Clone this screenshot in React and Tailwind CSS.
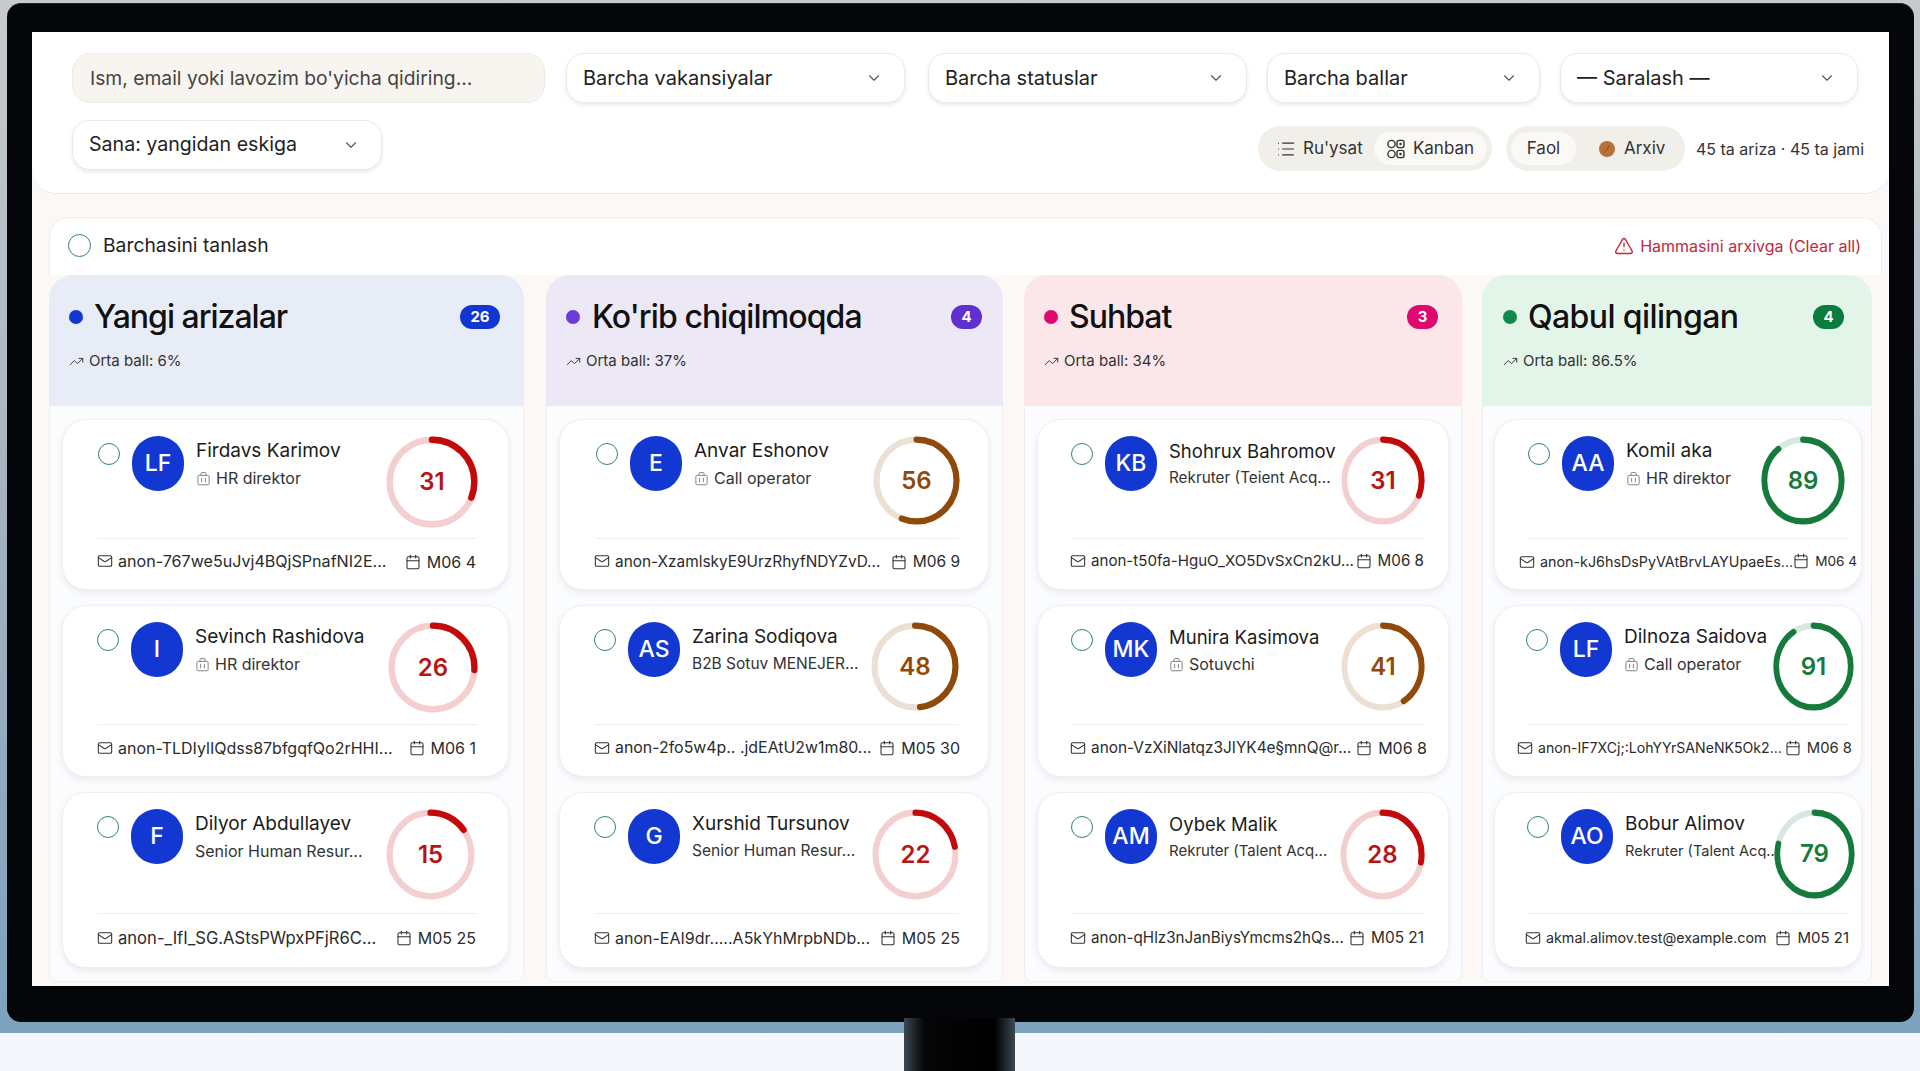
import React from 'react';
import { ChevronDown, List, TriangleAlert, TrendingUp, Mail, Calendar } from 'lucide-react';

const FILTERS = [
    { label: 'Barcha vakansiyalar', width: 'w-[339px]' },
    { label: 'Barcha statuslar', width: 'w-[319px]' },
    { label: 'Barcha ballar', width: 'w-[273px]' },
    { label: '— Saralash —', width: 'w-[298px]' },
];

const RING_TONES = {
    red: { arc: '#c30a0a', track: '#f4cfcf', text: 'text-[#b81414]' },
    brown: { arc: '#8f4a0b', track: '#ecdfd4', text: 'text-[#8f4a0b]' },
    green: { arc: '#157a3c', track: '#d9e8de', text: 'text-[#157a3c]' },
};

const COLUMNS = [
    {
        title: 'Yangi arizalar',
        count: 26,
        avg: '6%',
        width: 'w-[475px]',
        head: 'bg-[#e8ecf7] pl-[20px] pr-[24px]',
        dot: 'bg-[#1038d0]',
        badge: 'bg-[#1038d0] w-[40px]',
        titleCls: 'ml-[11px] tracking-[-1px]',
        body: 'pl-[12px] pr-[14px]',
        top: 'pl-[35px] pr-[30px]',
        rule: 'ml-[34px] mr-[31px]',
        foot: 'pl-[34px] pr-[32px]',
        cards: [
            { initials: 'LF', name: 'Firdavs Karimov', role: 'HR direktor', icon: true, score: 31, tone: 'red', mail: 'anon-767we5uJvj4BQjSPnafNI2E...', mailSize: 'text-[16.1px]', date: 'M06 4', ring: 'w-[92px] h-[92px]' },
            { initials: 'I', name: 'Sevinch Rashidova', role: 'HR direktor', icon: true, score: 26, tone: 'red', mail: 'anon-TLDIylIQdss87bfgqfQo2rHHI...', date: 'M06 1', ring: 'w-[90px] h-[91px]', top: 'pl-[34px] pr-[30px]' },
            { initials: 'F', name: 'Dilyor Abdullayev', role: 'Senior Human Resur...', score: 15, tone: 'red', mail: 'anon-_IfI_SG.AStsPWpxPFjR6C...', mailSize: 'text-[16.6px]', date: 'M05 25', ring: 'w-[89px] h-[91px]', top: 'pl-[34px] pr-[33px]' },
        ],
    },
    {
        title: "Ko'rib chiqilmoqda",
        count: 4,
        avg: '37%',
        width: 'w-[457px]',
        head: 'bg-[#ece8f6] pl-[20px] pr-[21px]',
        dot: 'bg-[#6d3bd8]',
        badge: 'bg-[#5f2fd0] w-[31px]',
        titleCls: 'ml-[12px] tracking-[-0.9px]',
        body: 'pl-[12px] pr-[13px]',
        top: 'pl-[36px] pr-[28px]',
        rule: 'ml-[35px] mr-[29px]',
        foot: 'pl-[34px] pr-[28px]',
        cards: [
            { initials: 'E', name: 'Anvar Eshonov', role: 'Call operator', icon: true, score: 56, tone: 'brown', mail: 'anon-XzamlskyE9UrzRhyfNDYZvD...', mailSize: 'text-[15.4px]', date: 'M06 9', dateSize: 'text-[15.5px]', ring: 'w-[87px] h-[89px]' },
            { initials: 'AS', name: 'Zarina Sodiqova', role: 'B2B Sotuv MENEJER...', roleSize: 'text-[15.5px]', score: 48, tone: 'brown', mail: 'anon-2fo5w4p.. .jdEAtU2w1m80...', mailSize: 'text-[15.9px]', date: 'M05 30', ring: 'w-[88px] h-[89px]', top: 'pl-[34px] pr-[29px]' },
            { initials: 'G', name: 'Xurshid Tursunov', role: 'Senior Human Resur...', roleSize: 'text-[15.6px]', score: 22, tone: 'red', mail: 'anon-EAI9dr.....A5kYhMrpbNDb...', date: 'M05 25', ring: 'w-[87px] h-[91px]', top: 'pl-[34px] pr-[29px]' },
        ],
    },
    {
        title: 'Suhbat',
        count: 3,
        avg: '34%',
        width: 'w-[438px]',
        head: 'bg-[#fbe7e9] pl-[20px] pr-[24px]',
        dot: 'bg-[#e0086f]',
        badge: 'bg-[#dc0a6e] w-[31px]',
        titleCls: 'ml-[11px] tracking-[-1px]',
        body: 'pl-[12px] pr-[12px]',
        top: 'pl-[33px] pr-[23px]',
        rule: 'ml-[34px] mr-[24px]',
        foot: 'pl-[32px] pr-[24px]',
        cards: [
            { initials: 'KB', name: 'Shohrux Bahromov', nameSize: 'text-[18.5px]', role: 'Rekruter (Teient Acq...', roleSize: 'text-[15.3px]', score: 31, tone: 'red', mail: 'anon-t50fa-HguO_XO5DvSxCn2kU...', mailSize: 'text-[15.1px]', date: 'M06 8', dateSize: 'text-[15.2px]', ring: 'w-[84px] h-[89px]' },
            { initials: 'MK', name: 'Munira Kasimova', nameSize: 'text-[18.5px]', role: 'Sotuvchi', icon: true, score: 41, tone: 'brown', mail: 'anon-VzXiNlatqz3JIYK4e§mnQ@r...', mailSize: 'text-[15.4px]', date: 'M06 8', ring: 'w-[84px] h-[89px]', foot: 'pl-[32px] pr-[21px]' },
            { initials: 'AM', name: 'Oybek Malik', nameSize: 'text-[18.5px]', role: 'Rekruter (Talent Acq...', roleSize: 'text-[15px]', score: 28, tone: 'red', mail: 'anon-qHlz3nJanBiysYmcms2hQs...', mailSize: 'text-[15.2px]', date: 'M05 21', dateSize: 'text-[15.4px]', ring: 'w-[85px] h-[91px]' },
        ],
    },
    {
        title: 'Qabul qilingan',
        count: 4,
        avg: '86.5%',
        width: 'w-[390px]',
        head: 'bg-[#e3f4e9] pl-[21px] pr-[28px]',
        dot: 'bg-[#0f8a4a]',
        badge: 'bg-[#0a7d3e] w-[31px]',
        titleCls: 'ml-[11px] tracking-[-0.6px]',
        body: 'pl-[11px] pr-[9px]',
        top: 'pl-[33px] pr-[8px]',
        rule: 'ml-[32px] mr-[12px]',
        foot: 'pl-[24px] pr-[7px]',
        cards: [
            { initials: 'AA', name: 'Komil aka', role: 'HR direktor', icon: true, score: 89, tone: 'green', mail: 'anon-kJ6hsDsPyVAtBrvLAYUpaeEs...', mailSize: 'text-[14.3px]', date: 'M06 4', dateSize: 'text-[13.6px]', ring: 'w-[84px] h-[89px] mr-[8px]' },
            { initials: 'LF', name: 'Dilnoza Saidova', role: 'Call operator', icon: true, score: 91, tone: 'green', mail: 'anon-IF7XCj;:LohYYrSANeNK5Ok2...', mailSize: 'text-[14.1px]', date: 'M06 8', dateSize: 'text-[14.8px]', ring: 'w-[81px] h-[89px]', top: 'pl-[31px] pr-[7px]', foot: 'pl-[22px] pr-[9px]' },
            { initials: 'AO', name: 'Bobur Alimov', role: 'Rekruter (Talent Acq...', roleSize: 'text-[14.6px]', score: 79, tone: 'green', mail: 'akmal.alimov.test@example.com', mailSize: 'text-[14.3px]', date: 'M05 21', dateSize: 'text-[15px]', ring: 'w-[81px] h-[90px]', top: 'pl-[32px] pr-[6px]', foot: 'pl-[30px] pr-[12px]' },
        ],
    },
];

const SelectBox = ({ label, width, textSize = 'text-[20px]' }) => (
    <div className={`${width} h-[50px] flex items-center justify-between pl-[16px] pr-[21px] bg-white rounded-[18px] border border-[#ebebeb] shadow-[0_2px_4px_rgba(0,0,0,0.09)] text-[#222] ${textSize}`}>
        <span>{label}</span>
        <ChevronDown size={18} strokeWidth={1.5} className="text-[#555]" />
    </div>
);

const RadioDot = ({ className = '' }) => (
    <span className={`block shrink-0 rounded-full border-[1.5px] border-[#2f8a58] ${className}`} />
);

const KanbanIcon = () => (
    <svg width="18" height="20" viewBox="0 0 18 20" fill="none" stroke="#333" strokeWidth="1.4">
        <circle cx="4.5" cy="5" r="3.6" />
        <circle cx="4.5" cy="15" r="3.6" />
        <rect x="10" y="1.4" width="7" height="7.2" rx="2" />
        <rect x="10" y="11.4" width="7" height="7.2" rx="2" />
        <rect x="12.4" y="3.8" width="2.2" height="2.4" fill="#333" stroke="none" />
        <rect x="12.4" y="13.8" width="2.2" height="2.4" fill="#333" stroke="none" />
    </svg>
);

const ArchiveDot = () => (
    <svg width="16" height="16" viewBox="0 0 16 16">
        <circle cx="8" cy="8" r="8" fill="#b87239" />
        <path d="M4.5 12 Q8.5 9 10.5 4" stroke="#8a4c1c" strokeWidth="1" fill="none" />
    </svg>
);

const RoleIcon = () => (
    <svg width="15" height="15" viewBox="0 0 24 24" fill="none" stroke="#858585" strokeWidth="1.6" className="shrink-0">
        <rect x="3" y="7" width="18" height="15" rx="2" />
        <path d="M8 7V4a1.5 1.5 0 0 1 1.5-1.5h5A1.5 1.5 0 0 1 16 4v3" />
        <path d="M9 11v7M15 11v7" />
    </svg>
);

const ScoreRing = ({ score, tone, size }) => {
    const { arc, track, text } = RING_TONES[tone];
    return (
        <div className={`relative shrink-0 ml-auto flex items-center justify-center ${size}`}>
            <svg viewBox="0 0 100 100" preserveAspectRatio="none" className="absolute inset-0 w-full h-full">
                <circle cx="50" cy="50" r="46" fill="none" stroke={track} strokeWidth="7" />
                <circle
                    cx="50"
                    cy="50"
                    r="46"
                    fill="none"
                    stroke={arc}
                    strokeWidth="7"
                    strokeLinecap="round"
                    pathLength="100"
                    strokeDasharray={`${score} 100`}
                    transform="rotate(-90 50 50)"
                />
            </svg>
            <span className={`text-[24px] font-semibold leading-none ${text}`}>{score}</span>
        </div>
    );
};

const CandidateCard = ({ card, col, height, rowHeight }) => (
    <div className={`${height} flex flex-col pt-[16px] bg-white rounded-[24px] border border-[#eff0f3] shadow-[0_3px_6px_rgba(40,50,80,0.09)]`}>
        <div className={`flex items-start ${rowHeight} ${card.top || col.top}`}>
            <RadioDot className="w-[22px] h-[22px] mt-[7px]" />
            <div className="w-[52px] h-[55px] ml-[12px] mr-[12px] shrink-0 rounded-full bg-[#1338d2] flex items-center justify-center text-white text-[23px] font-medium">
                {card.initials}
            </div>
            <div className="min-w-0 whitespace-nowrap">
                <div className={`mt-[3px] leading-[24px] text-[#1b1b1b] ${card.nameSize || 'text-[19px]'}`}>{card.name}</div>
                <div className={`mt-[3px] flex items-center gap-[5px] leading-[24px] text-[#333] ${card.roleSize || 'text-[16px]'}`}>
                    {card.icon && <RoleIcon />}
                    <span>{card.role}</span>
                </div>
            </div>
            <ScoreRing score={card.score} tone={card.tone} size={card.ring} />
        </div>
        <div className={`h-px bg-[#eeeff2] ${col.rule}`} />
        <div className={`flex flex-1 items-center justify-between pb-[5px] whitespace-nowrap text-[#2b2b2b] ${card.foot || col.foot}`}>
            <span className={`flex items-center gap-[5px] ${card.mailSize || 'text-[16px]'}`}>
                <Mail size={16} strokeWidth={1.6} className="text-[#333] shrink-0" />
                {card.mail}
            </span>
            <span className={`flex items-center gap-[6px] ${card.dateSize || 'text-[16px]'}`}>
                <Calendar size={16} strokeWidth={1.6} className="text-[#333] shrink-0" />
                {card.date}
            </span>
        </div>
    </div>
);

const KanbanColumn = ({ col }) => (
    <div className={`${col.width} shrink-0 flex flex-col`}>
        <div className={`h-[131px] rounded-t-[24px] pt-[22px] ${col.head}`}>
            <div className="h-[40px] flex items-center">
                <span className={`w-[14px] h-[14px] rounded-full shrink-0 ${col.dot}`} />
                <span className={`text-[32px] font-medium text-[#111] whitespace-nowrap ${col.titleCls}`}>{col.title}</span>
                <span className={`ml-auto h-[24px] rounded-full flex items-center justify-center text-white text-[15px] font-bold ${col.badge}`}>
                    {col.count}
                </span>
            </div>
            <div className="mt-[13px] flex items-center gap-[5px] text-[15px] text-[#333]">
                <TrendingUp size={15} strokeWidth={1.5} />
                <span>Orta ball: {col.avg}</span>
            </div>
        </div>
        <div className={`flex-1 flex flex-col gap-[15px] pt-[13px] bg-[#fbfcfe] border-x border-b border-[#f0f0f2] rounded-b-[8px] ${col.body}`}>
            <CandidateCard card={col.cards[0]} col={col} height="h-[171px]" rowHeight="h-[102px]" />
            <CandidateCard card={col.cards[1]} col={col} height="h-[172px]" rowHeight="h-[102px]" />
            <CandidateCard card={col.cards[2]} col={col} height="h-[176px]" rowHeight="h-[104px]" />
        </div>
    </div>
);

export default function App() {
    return (
        <div className="relative w-[1920px] h-[1071px] overflow-hidden bg-[#f4f8fc] font-['Inter',sans-serif]">
            <div className="h-[1033px] pt-[3px] pl-[7px] pr-[6px] bg-gradient-to-b from-[#c8cbcd] via-[#a3b2be] to-[#7da1bc]">
                <div className="h-[1019px] pt-[28px] px-[25px] bg-[#04060a] rounded-[14px] border-t border-[#23262a]">
                    <div className="h-[954px] overflow-hidden bg-[#fbf8f5]">
                        {/* Filter bar */}
                        <div className="h-[162px] pt-[21px] pl-[40px] pr-[31px] bg-white rounded-b-[24px] border-b border-[#e9e8e6]">
                            <div className="flex items-center">
                                <div className="w-[473px] h-[50px] mr-[21px] flex items-center pl-[17px] rounded-[18px] bg-[#f8f5f0] border border-[#ecebe7] text-[19.3px] text-[#444]">
                                    Ism, email yoki lavozim bo'yicha qidiring...
                                </div>
                                <SelectBox {...FILTERS[0]} />
                                <div className="w-[23px]" />
                                <SelectBox {...FILTERS[1]} />
                                <div className="w-[20px]" />
                                <SelectBox {...FILTERS[2]} />
                                <div className="w-[20px]" />
                                <SelectBox {...FILTERS[3]} />
                            </div>
                            <div className="mt-[17px] -mr-[6px] flex items-start">
                                <SelectBox label="Sana: yangidan eskiga" width="w-[310px]" textSize="text-[19.6px]" />
                                <div className="ml-auto mt-[6px] flex items-center text-[17px] text-[#333]">
                                    <div className="w-[234px] h-[45px] flex items-center pl-[18px] pr-[5px] rounded-full bg-[#f1efea]">
                                        <List size={20} strokeWidth={1.4} />
                                        <span className="ml-[7px]">Ru'ysat</span>
                                        <div className="ml-auto w-[113px] h-[33px] flex items-center justify-center gap-[8px] rounded-full bg-[#faf9f6]">
                                            <KanbanIcon />
                                            <span>Kanban</span>
                                        </div>
                                    </div>
                                    <div className="w-[179px] h-[45px] ml-[14px] flex items-center pl-[5px] rounded-full bg-[#f1efea]">
                                        <div className="w-[65px] h-[33px] flex items-center justify-center rounded-full bg-[#faf9f6]">Faol</div>
                                        <span className="ml-[23px]"><ArchiveDot /></span>
                                        <span className="ml-[9px]">Arxiv</span>
                                    </div>
                                    <span className="ml-[11px] text-[16px] whitespace-nowrap">45 ta ariza · 45 ta jami</span>
                                </div>
                            </div>
                        </div>

                        {/* Select all bar */}
                        <div className="h-[58px] mt-[23px] ml-[17px] mr-[7px] pb-[2px] flex items-center justify-between pl-[18px] pr-[20px] bg-white rounded-t-[20px] border-x border-t border-[#efeeec]">
                            <div className="flex items-center gap-[12px]">
                                <RadioDot className="w-[23px] h-[23px]" />
                                <span className="text-[19.3px] text-[#222]">Barchasini tanlash</span>
                            </div>
                            <div className="flex items-center gap-[6px] text-[16px] text-[#c12a3e]">
                                <TriangleAlert size={20} strokeWidth={1.7} />
                                <span>Hammasini arxivga (Clear all)</span>
                            </div>
                        </div>

                        {/* Board */}
                        <div className="h-[707px] ml-[17px] flex">
                            <KanbanColumn col={COLUMNS[0]} />
                            <div className="w-[22px]" />
                            <KanbanColumn col={COLUMNS[1]} />
                            <div className="w-[21px]" />
                            <KanbanColumn col={COLUMNS[2]} />
                            <div className="w-[20px]" />
                            <KanbanColumn col={COLUMNS[3]} />
                        </div>
                    </div>
                </div>
            </div>

            {/* Monitor stand */}
            <div className="absolute left-[904px] top-[1018px] w-[111px] h-[53px] bg-[linear-gradient(90deg,#3e4852,#050607_18%,#000_82%,#3e4852)]" />
        </div>
    );
}
